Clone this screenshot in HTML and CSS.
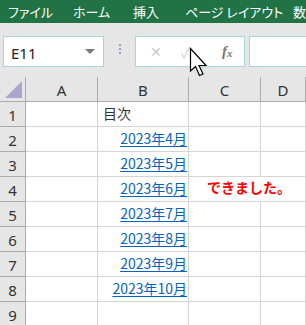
FILE: index.html
```html
<!DOCTYPE html>
<html lang="ja">
<head>
  <meta charset="UTF-8">
  <title>目次</title>
  <link rel="stylesheet" href="styles.css">
</head>
<body>

  <div class="ribbon">
    <span class="tab tab-file">ファイル</span>
    <span class="tab tab-home">ホーム</span>
    <span class="tab tab-insert">挿入</span>
    <span class="tab tab-layout">ページ レイアウト</span>
    <span class="tab">数式</span>
  </div>

  <div class="toolbar">
    <div class="name-box">
      <span>E11</span>
      <span class="drop"></span>
    </div>
    <div class="dots"><i></i><i></i><i></i></div>
    <div class="fx-box">
      <span class="cancel">✕</span>
      <span class="enter">✓</span>
      <span class="fx">f<sub>x</sub></span>
    </div>
    <div class="formula"></div>
  </div>

  <div class="sheet">
    <div class="hd corner"><span class="tri"></span></div>
    <div class="hd">A</div>
    <div class="hd">B</div>
    <div class="hd">C</div>
    <div class="hd">D</div>

    <div class="rh">1</div><div class="c"></div><div class="c text">目次</div><div class="c"></div><div class="c"></div>
    <div class="rh">2</div><div class="c"></div><div class="c link"><a>2023年4月</a></div><div class="c"></div><div class="c"></div>
    <div class="rh">3</div><div class="c"></div><div class="c link"><a>2023年5月</a></div><div class="c"></div><div class="c"></div>
    <div class="rh">4</div><div class="c"></div><div class="c link"><a>2023年6月</a></div><div class="c done">できました。</div><div class="c"></div>
    <div class="rh">5</div><div class="c"></div><div class="c link"><a>2023年7月</a></div><div class="c"></div><div class="c"></div>
    <div class="rh">6</div><div class="c"></div><div class="c link"><a>2023年8月</a></div><div class="c"></div><div class="c"></div>
    <div class="rh">7</div><div class="c"></div><div class="c link"><a>2023年9月</a></div><div class="c"></div><div class="c"></div>
    <div class="rh">8</div><div class="c"></div><div class="c link"><a>2023年10月</a></div><div class="c"></div><div class="c"></div>
    <div class="rh">9</div><div class="c"></div><div class="c"></div><div class="c"></div><div class="c"></div>
  </div>

  <svg class="cursor" width="22" height="32" viewBox="0 0 22 32">
    <path d="M1.5 1.5 L1.5 24 L6.5 19.5 L10.5 28.5 L14 27 L10 18.5 L17 18.5 Z" fill="#fff" stroke="#000" stroke-width="1.2" stroke-linejoin="miter"/>
  </svg>

</body>
</html>
```

FILE: styles.css
```css
body {
  margin: 0;
  background: #e6e6e6;
  font-family: "Noto Sans", "Noto Sans CJK JP", sans-serif;
  width: 306px;
  height: 325px;
  overflow: hidden;
  position: relative;
}

.ribbon {
  background: #217346;
  height: 23px;
  display: flex;
  align-items: center;
  padding-left: 8px;
  color: #fff;
  font-family: "Noto Sans CJK JP", sans-serif;
  font-size: 13px;
  font-feature-settings: "palt";
  white-space: nowrap;
  overflow: hidden;
}

.tab { flex-shrink: 0; }
.tab-file { width: 65px; }
.tab-home { width: 60px; }
.tab-insert { width: 52px; }
.tab-layout { width: 108px; }

.toolbar {
  height: 54px;
  display: flex;
  align-items: flex-start;
  padding: 13px 0 0 3px;
  box-sizing: border-box;
}

.name-box,
.fx-box,
.formula {
  height: 31px;
  box-sizing: border-box;
  background: #fff;
  border: 1px solid #acd4de;
}

.name-box {
  width: 101px;
  display: flex;
  align-items: center;
  justify-content: space-between;
  padding: 2px 8px 0 7px;
  font-size: 15px;
  color: #222;
}

.drop {
  width: 0;
  height: 0;
  border-left: 5px solid transparent;
  border-right: 5px solid transparent;
  border-top: 5px solid #7a7a7a;
  margin-bottom: 3px;
}

.dots {
  width: 31px;
  display: flex;
  flex-direction: column;
  align-items: center;
  gap: 2px;
  padding-top: 8px;
}

.dots i {
  width: 2px;
  height: 2px;
  background: #9d98c9;
}

.fx-box {
  width: 110px;
  display: flex;
  align-items: center;
  padding-left: 14px;
  font-size: 14px;
  color: #c8c8c8;
}

.cancel { width: 31px; }
.enter { width: 41px; color: #d0d0d0; }

.fx {
  font-family: "Liberation Serif", serif;
  font-style: italic;
  font-weight: bold;
  font-size: 15px;
  color: #7a7a7a;
}

.fx sub {
  font-size: 11px;
  vertical-align: -1px;
}

.formula {
  margin-left: 4px;
  flex: 1;
  border-right: none;
}

.sheet {
  display: grid;
  grid-template-columns: 26px 72px 91px 72px 1fr;
  grid-template-rows: 25px repeat(9, 25px);
  background: #fff;
}

.sheet > div {
  box-sizing: border-box;
  border-right: 1px solid #d4d4d4;
  border-bottom: 1px solid #d4d4d4;
}

.sheet .hd,
.sheet .rh {
  background: #e6e6e6;
  border-color: #ababab;
  color: #333;
  font-size: 15px;
  display: flex;
  align-items: center;
  justify-content: center;
}

.sheet .hd {
  padding-top: 2px;
}

.sheet .rh {
  padding-top: 1px;
}

.corner {
  position: relative;
}

.tri {
  position: absolute;
  right: 3px;
  bottom: 3px;
  width: 0;
  height: 0;
  border-left: 17px solid transparent;
  border-bottom: 17px solid #aaa6cc;
}

.c {
  font-family: "Noto Sans CJK JP", sans-serif;
  font-size: 14px;
  white-space: nowrap;
  display: flex;
  align-items: flex-end;
  padding-bottom: 3px;
}

.text {
  padding-left: 5px;
  color: #333;
}

.link {
  justify-content: flex-end;
  padding-right: 1px;
}

.link a {
  color: #0563c1;
  text-decoration: underline;
  text-underline-offset: 2px;
}

.sheet .done {
  color: #ff0000;
  font-weight: bold;
  padding-left: 18px;
  padding-bottom: 4px;
  overflow: visible;
  border-right-color: #fff;
}

.cursor {
  position: absolute;
  left: 189px;
  top: 47px;
}
```
